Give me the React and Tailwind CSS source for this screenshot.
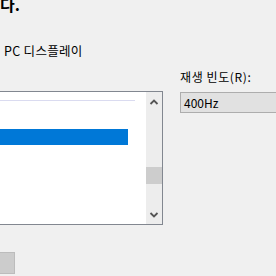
export default function App() {
  const font = { fontFamily: '"Noto Sans CJK KR", "Noto Sans", sans-serif' };
  return (
    <div className="w-[276px] h-[276px] bg-[#f0f0f0] overflow-hidden relative text-[12px] text-black" style={font}>
      <div className="font-bold text-[16px] leading-[15px] -mt-[3px] pl-[0px]">다.</div>
      <div className="flex">
        <div className="flex flex-col w-[180px] shrink-0">
          <div className="pl-[4px] mt-[32px] leading-[14px] text-[12.5px] tracking-[0.3px]">PC 디스플레이</div>
          <div className="mt-[33px] -ml-px w-[164px] h-[134px] border border-[#828790] bg-white flex">
            <div className="flex-1 flex flex-col">
              <div className="mt-[8px] h-px bg-[#dadbf0] mr-[11px]"></div>
              <div className="mt-[28px] h-[16px] bg-[#0078d7] mr-[18px]"></div>
            </div>
            <div className="w-[16px] bg-[#ededed] flex flex-col items-center">
              <svg width="16" height="17" viewBox="0 0 16 17" className="shrink-0">
                <path d="M4.5 12 L8 8.5 L11.5 12" stroke="#555555" strokeWidth="1.8" fill="none" />
              </svg>
              <div className="mt-[58px] w-[16px] h-[17px] bg-[#cdcdcd]"></div>
              <div className="flex-1"></div>
              <svg width="16" height="17" viewBox="0 0 16 17" className="shrink-0">
                <path d="M4.5 6 L8 9.5 L11.5 6" stroke="#555555" strokeWidth="1.8" fill="none" />
              </svg>
            </div>
          </div>
          <div className="mt-[27px] -ml-px w-[16px] h-[22px] bg-[#cccccc] border border-[#bcbcbc]"></div>
        </div>
        <div className="flex flex-col flex-1">
          <div className="mt-[57px] leading-[16px] text-[12px] tracking-[0.6px]">재생 빈도(R):</div>
          <div className="mt-[7px] h-[21px] w-[110px] border border-[#adadad] bg-[#e1e1e1] flex items-center pl-[3px] leading-[14px]">400Hz</div>
        </div>
      </div>
    </div>
  );
}
